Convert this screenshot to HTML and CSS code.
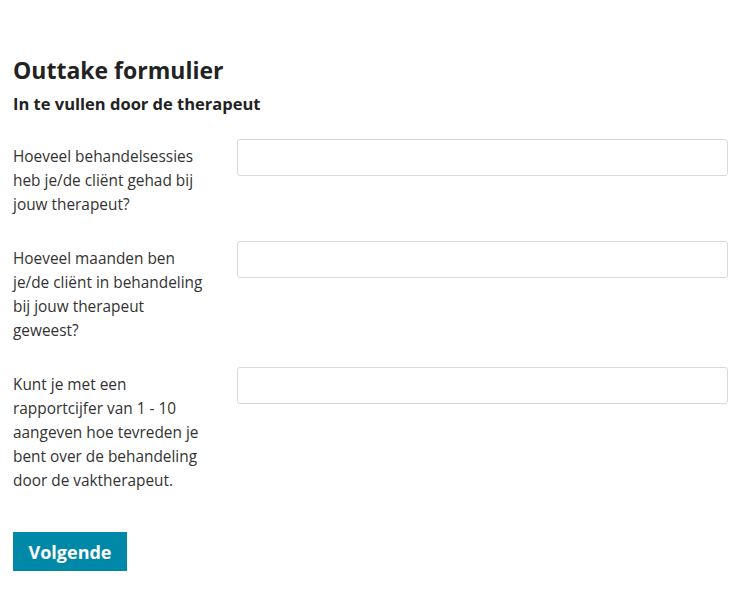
FILE: index.html
```html
<!DOCTYPE html>
<html lang="nl">
<head>
<meta charset="utf-8">
<title>Outtake formulier</title>
<link rel="stylesheet" href="styles.css">
</head>
<body>
<main class="page">
  <h1 class="title">Outtake formulier</h1>
  <h2 class="subtitle">In te vullen door de therapeut</h2>
  <form class="form">
    <div class="row">
      <label class="label" for="q1">Hoeveel behandelsessies heb je/de cliënt gehad bij jouw therapeut?</label>
      <input class="input" id="q1" type="text">
    </div>
    <div class="row">
      <label class="label" for="q2">Hoeveel maanden ben je/de cliënt in behandeling bij jouw therapeut geweest?</label>
      <input class="input" id="q2" type="text">
    </div>
    <div class="row">
      <label class="label" for="q3">Kunt je met een rapportcijfer van 1 - 10 aangeven hoe tevreden je bent over de behandeling door de vaktherapeut.</label>
      <input class="input" id="q3" type="text">
    </div>
    <button class="button" type="button">Volgende</button>
  </form>
</main>
</body>
</html>
```
FILE: styles.css
```css
* { box-sizing: border-box; }
html, body { margin: 0; padding: 0; background: #fff; }
body {
  font-family: "Open Sans", "Noto Sans", sans-serif;
  color: #333;
}
.page {
  padding: 55px 20px 0 13px;
}
.title {
  margin: 0;
  font-size: 23px;
  line-height: 30px;
  font-weight: 700;
  color: #222;
}
.subtitle {
  margin: 7px 0 0;
  font-size: 16.5px;
  line-height: 24px;
  font-weight: 700;
  color: #222;
}
.form {
  margin-top: 23px;
  display: flex;
  flex-direction: column;
  gap: 24px;
}
.row {
  display: flex;
  align-items: flex-start;
  gap: 12px;
}
.label {
  width: 212px;
  padding: 6px 14px 0 0;
  font-size: 15.4px;
  line-height: 24px;
  color: #333;
}
.input {
  flex: 1;
  height: 37px;
  border: 1px solid #d5dae0;
  border-radius: 3px;
  background: #fff;
  font: inherit;
}
.button {
  align-self: flex-start;
  margin-top: 15px;
  width: 114px;
  height: 39px;
  border: 0;
  border-radius: 0;
  background: #0088a9;
  color: #fff;
  font-family: inherit;
  font-size: 18px;
  font-weight: 700;
  cursor: pointer;
}
```
